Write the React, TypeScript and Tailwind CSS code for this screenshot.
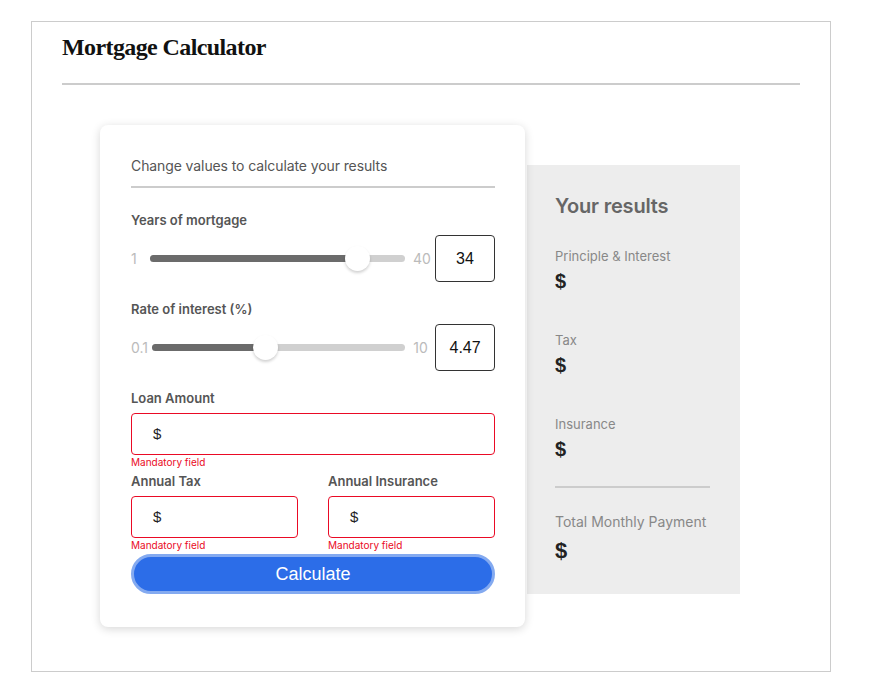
import React from "react";

const sans = "font-['Inter',sans-serif]";
const arial = "font-['Liberation_Sans',Arial,sans-serif]";

const Slider = ({
  min,
  max,
  value,
  minW,
  trackW,
}: {
  min: string;
  max: string;
  value: number;
  minW: string;
  trackW: string;
}) => {
  const lo = parseFloat(min);
  const hi = parseFloat(max);
  const pct = (value - lo) / (hi - lo);
  return (
    <div className="mt-[7px] flex h-[47px] items-center">
      <span className={`${minW} text-[14px] text-[#bbb]`}>{min}</span>
      <div className={`relative h-[7px] ${trackW} rounded-full bg-[#d0d0d0]`}>
        <div
          className="absolute left-0 top-0 h-[7px] rounded-full bg-[#6b6b6b]"
          style={{ width: `calc(12px + ${pct} * (100% - 24px))` }}
        />
        <div
          className="absolute top-[-9px] h-[25px] w-[25px] rounded-full bg-white shadow-[0_2px_3px_rgba(0,0,0,0.18)]"
          style={{ left: `calc(${pct} * (100% - 24px))` }}
        />
      </div>
      <span className="w-[30px] pl-[8px] text-[14px] text-[#bbb]">{max}</span>
      <div
        className={`ml-auto flex h-[47px] w-[60px] items-center justify-center rounded-[4px] border border-[#333] text-[16px] text-[#111] ${arial}`}
      >
        {value}
      </div>
    </div>
  );
};

const Money = ({ className = "" }: { className?: string }) => (
  <div className={className}>
    <div
      className={`flex h-[42px] items-center rounded-[4px] border border-[#ea0a25] pl-[21px] text-[15px] text-[#222] ${arial}`}
    >
      $
    </div>
    <div className="mt-[1px] text-[10px] leading-[12px] text-[#ea0a25]">Mandatory field</div>
  </div>
);

const Result = ({ label, first }: { label: string; first?: boolean }) => (
  <div className={first ? "mt-[30px]" : "mt-[39px]"}>
    <div className="text-[13px] leading-[16px] text-[#888]">{label}</div>
    <div className={`mt-[5px] text-[20px] font-bold leading-[24px] text-[#222] ${arial}`}>$</div>
  </div>
);

export default function App() {
  return (
    <div className={`min-h-[694px] bg-white pt-[21px] ${sans}`}>
      <div className="ml-[31px] w-[800px] border border-[#ccc] px-[30px] pb-[44px]">
        <div className="h-[63px] border-b-2 border-[#ccc] pt-[13px]">
          <h1 className="font-['Liberation_Serif',serif] text-[24px] font-bold leading-[24px] tracking-[-0.6px] text-[#111]">
            Mortgage Calculator
          </h1>
        </div>

        <div className="ml-[38px] mt-[40px] flex items-start">
          <div className="relative z-10 h-[502px] w-[425px] rounded-lg bg-white pl-[31px] pr-[30px] pt-[31px] shadow-[0_2px_10px_rgba(0,0,0,0.16)]">
            <div className="border-b-2 border-[#ccc] pb-[10px] text-[14px] leading-[20px] tracking-[-0.1px] text-[#555]">
              Change values to calculate your results
            </div>

            <div className="mt-[24px] text-[13px] font-semibold leading-[16px] text-[#555]">
              Years of mortgage
            </div>
            <Slider min="1" max="40" value={34} minW="w-[19px]" trackW="w-[255px]" />

            <div className="mt-[19px] text-[13px] font-semibold leading-[16px] text-[#555]">
              Rate of interest (%)
            </div>
            <Slider min="0.1" max="10" value={4.47} minW="w-[21px]" trackW="w-[254px]" />

            <div className="mt-[19px] text-[13px] font-semibold leading-[16px] text-[#555]">
              Loan Amount
            </div>
            <Money className="mt-[7px]" />

            <div className="mt-[5px] grid grid-cols-2 gap-x-[30px]">
              <div>
                <div className="text-[13px] font-semibold leading-[16px] text-[#555]">Annual Tax</div>
                <Money className="mt-[7px]" />
              </div>
              <div>
                <div className="text-[13px] font-semibold leading-[16px] text-[#555]">Annual Insurance</div>
                <Money className="mt-[7px]" />
              </div>
            </div>

            <button
              className={`mt-[3px] flex h-[40px] w-full items-center justify-center rounded-full border-[3px] border-[#84aaf0] bg-[#2c6de8] text-[18px] text-white ${arial}`}
            >
              Calculate
            </button>
          </div>

          <div className="ml-[2px] mt-[40px] h-[429px] w-[213px] bg-[#ededed] pl-[28px] pt-[29px]">
            <div className="text-[20px] font-semibold leading-[24px] tracking-[-0.2px] text-[#666]">Your results</div>
            <Result label="Principle & Interest" first />
            <Result label="Tax" />
            <Result label="Insurance" />
            <div className="mt-[25px] w-[155px] border-t-2 border-[#ccc]" />
            <div className="mt-[25px] text-[14px] leading-[18px] text-[#888]">Total Monthly Payment</div>
            <div className={`mt-[7px] text-[22px] font-bold leading-[26px] text-[#222] ${arial}`}>$</div>
          </div>
        </div>
      </div>
    </div>
  );
}
